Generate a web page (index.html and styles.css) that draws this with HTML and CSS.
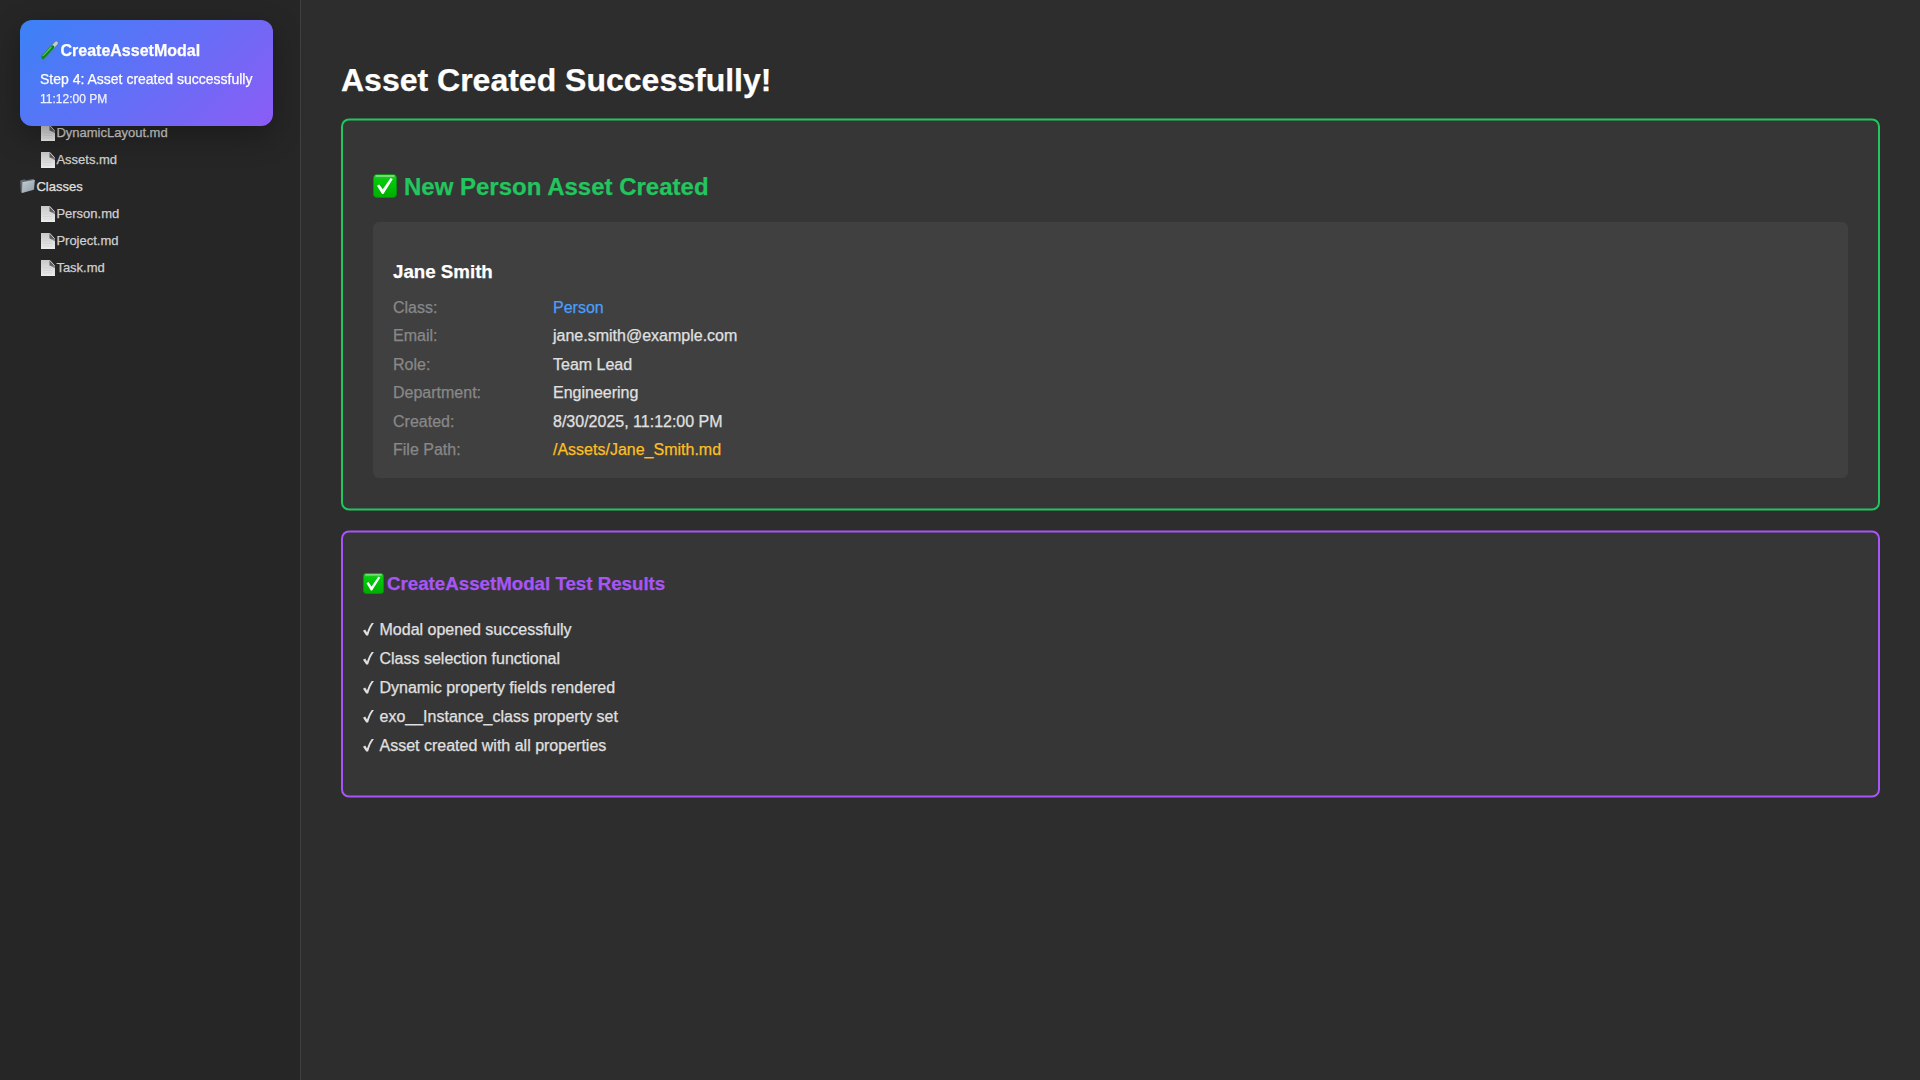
FILE: index.html
```html
<!DOCTYPE html>
<html lang="en">
<head>
<meta charset="utf-8">
<title>Asset Created</title>
<link rel="stylesheet" href="styles.css">
</head>
<body>
<svg class="defs" aria-hidden="true">
  <defs>
    <linearGradient id="green" x1="0" y1="0" x2="0" y2="1">
      <stop offset="0" stop-color="#35c535"/><stop offset=".25" stop-color="#00cb0a"/><stop offset="1" stop-color="#00ad00"/>
    </linearGradient>
    <linearGradient id="paper" x1="0" y1="0" x2="0" y2="1">
      <stop offset="0" stop-color="#c9c9c9"/><stop offset="1" stop-color="#ececec"/>
    </linearGradient>
    <linearGradient id="steel" x1="0" y1="0" x2="1" y2="1">
      <stop offset="0" stop-color="#c3ccd2"/><stop offset="1" stop-color="#8f9ba4"/>
    </linearGradient>
    <symbol id="check-box" viewBox="0 0 24 24">
      <rect x=".4" y=".4" width="23.2" height="23.2" rx="3.8" fill="url(#green)" stroke="#07900b" stroke-width=".8"/>
      <path d="M3 2.100h18" stroke="#8be58b" stroke-width="1.500" stroke-linecap="round"/>
      <path d="M4 11.800 6.200 10.400l3.600 4.900L17.600 4l2.200 1L10.400 20H9z" fill="#fff"/>
    </symbol>
    <symbol id="file" viewBox="0 0 14 16">
      <path d="M0 0h8.500L14 6V16H0z" fill="url(#paper)"/>
      <path d="M8.500 5.500 14 8.200V6L12 4z" fill="#858585"/>
      <path d="M8.500 0 14 6 8.500 5.500z" fill="#5c5c5c"/>
      <path d="M8.700 .3 13.500 5.600" stroke="#e4e4e4" stroke-width=".8"/>
      <path d="M2 8h9M2 10.500h9M2 13h9" stroke="#c8c8c8" stroke-width=".5"/>
    </symbol>
    <symbol id="folder" viewBox="0 0 15 16">
      <path d="M.2 3 1.200 2 5 1.400 6 2.200 13.600 .8 14.200 2 13.500 12 1.800 15 .8 14z" fill="#5d6b75"/>
      <path d="M2.500 4.600 14.800 2.400 14 11.500 1.800 15z" fill="url(#steel)"/>
      <path d="M2.500 4.600 14.800 2.400" stroke="#dbe2e6" stroke-width=".6"/>
    </symbol>
    <symbol id="tube" viewBox="0 0 20 20">
      <path d="M15.200 1.800 17.800 4 3.200 18.300" fill="none"/>
      <path d="M3 17.300 16.400 3" stroke="#55706c" stroke-width="4.200" stroke-linecap="round"/>
      <path d="M3 17.300 16.400 3" stroke="#b9d0cc" stroke-width="3.300" stroke-linecap="round"/>
      <path d="M3 17.300 12.600 7" stroke="#0a8220" stroke-width="3.500" stroke-linecap="round"/>
      <path d="M2.800 16.200 11.500 7" stroke="#3fd84a" stroke-width="1.100"/>
    </symbol>
    <symbol id="tick" viewBox="0 0 11 13">
      <path d="M0 7.800 2.200 6.500 4 9.500C5.300 5.500 7 2.300 8.700 0h2.200C8.300 3.300 6.500 7.500 5.100 12.500H3.200z" fill="#e0e0e0"/>
    </symbol>
  </defs>
</svg>

<div class="app">
  <aside class="sidebar">
    <div class="row row-file"><svg><use href="#file"/></svg><span>DynamicLayout.md</span></div>
    <div class="row row-file"><svg><use href="#file"/></svg><span>Assets.md</span></div>
    <div class="row row-folder"><svg><use href="#folder"/></svg><span>Classes</span></div>
    <div class="row row-file"><svg><use href="#file"/></svg><span>Person.md</span></div>
    <div class="row row-file"><svg><use href="#file"/></svg><span>Project.md</span></div>
    <div class="row row-file"><svg><use href="#file"/></svg><span>Task.md</span></div>
  </aside>

  <main class="content">
    <h1>Asset Created Successfully!</h1>

    <section class="card card-created">
      <h2><svg><use href="#check-box"/></svg><span>New Person Asset Created</span></h2>
      <div class="details">
        <h3>Jane Smith</h3>
        <div class="grid">
          <span class="label">Class:</span><span class="link">Person</span>
          <span class="label">Email:</span><span>jane.smith@example.com</span>
          <span class="label">Role:</span><span>Team Lead</span>
          <span class="label">Department:</span><span>Engineering</span>
          <span class="label">Created:</span><span>8/30/2025, 11:12:00 PM</span>
          <span class="label">File Path:</span><span class="path">/Assets/Jane_Smith.md</span>
        </div>
      </div>
    </section>

    <section class="card card-results">
      <h3><svg><use href="#check-box"/></svg><span>CreateAssetModal Test Results</span></h3>
      <ul>
        <li><svg><use href="#tick"/></svg><span>Modal opened successfully</span></li>
        <li><svg><use href="#tick"/></svg><span>Class selection functional</span></li>
        <li><svg><use href="#tick"/></svg><span>Dynamic property fields rendered</span></li>
        <li><svg><use href="#tick"/></svg><span>exo__Instance_class property set</span></li>
        <li><svg><use href="#tick"/></svg><span>Asset created with all properties</span></li>
      </ul>
    </section>
  </main>
</div>

<div class="toast">
  <div class="toast-title"><svg><use href="#tube"/></svg><span>CreateAssetModal</span></div>
  <div class="toast-step">Step 4: Asset created successfully</div>
  <div class="toast-time">11:12:00 PM</div>
</div>
</body>
</html>
```
FILE: styles.css
```css
* { box-sizing: border-box; }

body {
  margin: 0;
  background: #2d2d2d;
  color: #e0e0e0;
  font-family: "Liberation Sans", Arial, sans-serif;
  font-size: 16px;
  -webkit-text-stroke: 0.25px currentColor;
  overflow: hidden;
}

svg { display: block; flex: none; }
.defs { position: absolute; width: 0; height: 0; }
h1, h2, h3, ul { margin: 0; padding: 0; }

.app { display: flex; height: 1080px; }

/* Sidebar */
.sidebar {
  width: 301px;
  flex: none;
  padding: 119px 20px 0;
  background: #262626;
  border-right: 1px solid #404040;
}
.row {
  display: flex;
  align-items: center;
  height: 27px;
  font-size: 13px;
}
.row-file { padding-left: 21px; gap: 1.4px; color: #d0d0d0; }
.row-file svg { width: 14px; height: 16px; }
.row-folder { gap: 1.4px; }
.row-folder svg { width: 15px; height: 16px; margin-top: -1px; }

/* Main column */
.content { flex: 1; padding: 62px 40px 0; }
h1 { height: 56px; font-size: 32px; line-height: 37px; color: #fff; }

.card { position: relative; padding: 32px; color: #e0e0e0; }
.card::before {
  content: "";
  position: absolute;
  inset: 0;
  z-index: -1;
  background: #363636;
  border: 2px solid currentColor;
  border-radius: 8px;
  transform: translateY(0.5px);
}
.card-created { height: 392px; }
.card-created::before { border-color: #22c55e; }
.card-created h2 {
  display: flex;
  align-items: center;
  gap: 7px;
  height: 72px;
  font-size: 24px;
  line-height: 28px;
  color: #22c55e;
}
.card-created h2 svg { width: 24px; height: 24px; }
.card-created h2 span, .card-results h3 span { padding-top: 2px; }

.details {
  height: 256px;
  padding: 39px 20px 0;
  border-radius: 6px;
  background: #404040;
}
.details h3 { height: 38px; font-size: 18.72px; line-height: 22px; color: #fff; }
.grid {
  display: grid;
  grid-template-columns: 150px 1fr;
  gap: 10px;
  line-height: 18.4px;
}
.label { color: #888; }
.link { color: #4a9eff; }
.path { color: #fbbf24; }

.card-results { height: 267px; margin-top: 20px; padding: 42px 22px 0; }
.card-results::before { border-color: #a855f7; }
.card-results h3 {
  display: flex;
  align-items: center;
  gap: 3px;
  height: 22px;
  margin-bottom: 21px;
  font-size: 18.72px;
  line-height: 22px;
  color: #a855f7;
}
.card-results h3 svg { width: 21px; height: 21px; }
.card-results ul { list-style: none; }
.card-results li { display: flex; align-items: center; gap: 5.5px; height: 29px; }
.card-results li svg { width: 11px; height: 13px; }

/* Floating step notice */
.toast {
  position: fixed;
  top: 20px;
  left: 20px;
  width: 252.6px;
  height: 106px;
  padding: 20px;
  border-radius: 12px;
  background: linear-gradient(135deg, #3b82f6, #8b5cf6);
  box-shadow: 0 10px 30px rgba(0, 0, 0, 0.3);
  color: #fff;
}
.toast-title { display: flex; align-items: center; height: 20px; font-weight: bold; }
.toast-title svg { width: 20px; height: 20px; }
.toast-title span { padding: 2px 0 0 0.5px; }
.toast-step { margin-top: 11px; font-size: 14px; line-height: 16px; white-space: nowrap; }
.toast-time { margin-top: 5px; font-size: 12px; line-height: 14px; opacity: 0.9; }
```
